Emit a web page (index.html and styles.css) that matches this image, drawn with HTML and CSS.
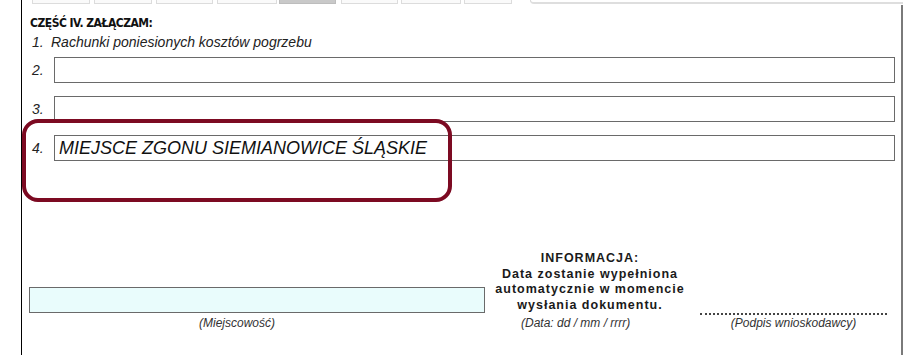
FILE: index.html
```html
<!DOCTYPE html>
<html lang="pl">
<head>
<meta charset="utf-8">
<title>Część IV</title>
<link rel="stylesheet" href="styles.css">
</head>
<body>
<div class="page">
  <div class="tabs">
    <span class="tab t1"></span>
    <span class="tab t2"></span>
    <span class="tab t3"></span>
    <span class="tab t4"></span>
    <span class="tab t5 active"></span>
    <span class="tab t6"></span>
    <span class="tab t7"></span>
    <span class="tab t8"></span>
    <span class="panel-edge"></span>
  </div>
  <div class="content">
    <div class="section-title">CZĘŚĆ IV. ZAŁĄCZAM:</div>
    <div class="item-static"><span class="num">1.</span><span>Rachunki poniesionych kosztów pogrzebu</span></div>
    <div class="item-row first"><span class="num">2.</span><div class="field"></div></div>
    <div class="item-row"><span class="num">3.</span><div class="field"></div></div>
    <div class="item-row"><span class="num">4.</span><div class="field filled">MIEJSCE ZGONU SIEMIANOWICE ŚLĄSKIE</div></div>

    <div class="bottom">
      <div class="col-place">
        <div class="place-field"></div>
      </div>
      <div class="col-info">
        <div class="info">INFORMACJA:<br>Data zostanie wypełniona<br>automatycznie w momencie<br>wysłania dokumentu.</div>
      </div>
      <div class="col-sign">
        <div class="dots"></div>
      </div>
      <div class="cap cap-place">(Miejscowość)</div>
      <div class="cap cap-date">(Data: dd / mm / rrrr)</div>
      <div class="cap cap-sign">(Podpis wnioskodawcy)</div>
    </div>
  </div>
  <div class="highlight"></div>
</div>
</body>
</html>
```

FILE: styles.css
```css
* { box-sizing: border-box; }

html, body {
  margin: 0;
  padding: 0;
  background: #ffffff;
  width: 903px;
  height: 355px;
  overflow: hidden;
}

body {
  font-family: "Liberation Sans", Arial, sans-serif;
  color: #111;
}

.page {
  position: relative;
  margin-left: 21px;
  width: 882px;
  height: 355px;
  border-left: 1px solid #000;
}

.tabs {
  display: flex;
  height: 5px;
  padding-left: 10px;
  gap: 0;
}

.tab {
  height: 4px;
  border: 1px solid #dcdcdc;
  border-top: none;
  background: #fafafa;
  margin-right: 4px;
}
.t1 { width: 58px; }
.t2 { width: 58px; }
.t3 { width: 57px; }
.t4 { width: 60px; margin-right: 2px; }
.t5 { width: 57px; margin-right: 5px; }
.t6 { width: 57px; margin-right: 3px; }
.t7 { width: 60px; margin-right: 3px; }
.t8 { width: 48px; margin-right: 18px; }
.tab.active { background: #c9c9c9; border-color: #bdbdbd; }

.panel-edge {
  flex: 1;
  height: 4px;
  border-left: 1px solid #d8d8d8;
  border-bottom: 2px solid #dedede;
  border-bottom-left-radius: 4px;
}

.content {
  height: 350px;
  border-right: 2px solid #7a7a7a;
  padding: 10px 6px 0 0;
}

.section-title {
  padding-left: 8px;
  font-family: "DejaVu Sans Condensed", "DejaVu Sans", sans-serif;
  font-size: 12px;
  font-weight: bold;
  letter-spacing: -0.5px;
  line-height: 16px;
  color: #111;
}

.item-static {
  display: flex;
  margin-top: 3px;
  padding-left: 10px;
  font-size: 14px;
  font-style: italic;
  line-height: 16px;
  color: #222;
}
.item-static .num { width: 19px; }

.item-row {
  display: flex;
  align-items: center;
  margin-top: 13px;
  padding-left: 10px;
}
.item-row.first { margin-top: 7px; }

.num {
  font-size: 14px;
  font-style: italic;
  color: #222;
}
.item-row .num { width: 22px; }

.field {
  flex: 1;
  height: 26px;
  border: 1px solid #6a6a6a;
  background: #fff;
}

.field.filled {
  padding-left: 4px;
  font-size: 18px;
  font-style: italic;
  line-height: 24px;
  color: #111;
  white-space: nowrap;
}

.bottom {
  display: grid;
  grid-template-columns: 468px 200px 1fr;
  grid-template-rows: auto auto;
  row-gap: 3px;
  margin-top: 90px;
}

.col-place, .col-info, .col-sign { align-self: end; }

.col-place { padding-left: 7px; }
.place-field {
  width: 456px;
  height: 26px;
  border: 1px solid #6a6a6a;
  background: #e9fcfc;
}

.info {
  text-align: center;
  font-size: 12.5px;
  font-weight: bold;
  letter-spacing: 1px;
  line-height: 15.5px;
  color: #1a1a1a;
}

.col-sign { padding-left: 10px; }
.dots {
  width: 187px;
  height: 2px;
  border-top: 2px dotted #444;
  margin-bottom: -2px;
}

.cap {
  font-size: 12px;
  font-style: italic;
  line-height: 14px;
  color: #333;
}
.cap-place { padding-left: 177px; }
.cap-date { padding-left: 31px; }
.cap-sign { padding-left: 10px; width: 197px; text-align: center; }

.highlight {
  position: absolute;
  left: 0;
  top: 119px;
  width: 430px;
  height: 83px;
  border: 4px solid #7c0a22;
  border-radius: 16px;
  pointer-events: none;
}
```
